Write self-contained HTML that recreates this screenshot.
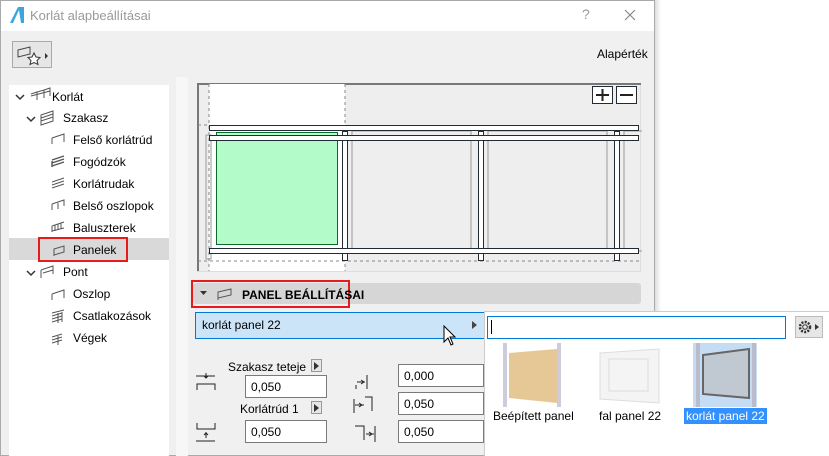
<!DOCTYPE html>
<html><head><meta charset="utf-8"><style>
*{margin:0;padding:0;box-sizing:border-box}
body{width:829px;height:456px;background:#fff;font-family:"Liberation Sans",sans-serif;font-size:12px;color:#000;position:relative;overflow:hidden}
.a{position:absolute}
.t{white-space:nowrap}
.inp{position:absolute;background:#fff;border:1px solid #7a7a7a;height:23px;padding:4px 0 0 5px;font-size:12px}
</style></head><body>
<div class="a" style="left:0;top:0;width:655px;height:456px;background:#f0f0f0;border:1px solid #aaa"></div>
<div class="a" style="left:655px;top:0;width:6px;height:456px;background:linear-gradient(90deg,#ddd,#fff)"></div>
<div class="a" style="left:1px;top:1px;width:653px;height:30px;background:#fff"></div>
<svg class="a" style="left:9px;top:6px" width="16" height="18"><path d="M1 17 L9 1 L15 1 L15 17 Z" fill="#3aa6dd"/><path d="M4 17 L10 4 L12 17Z" fill="#fff"/></svg>
<div class="a t" style="left:30px;top:8px;font-size:13px;color:#999">Korlát alapbeállításai</div>
<div class="a t" style="left:582px;top:6px;font-size:14px;color:#999">?</div>
<svg class="a" style="left:624px;top:9px" width="12" height="12"><path d="M1 1L11 11M11 1L1 11" stroke="#888" stroke-width="1.2"/></svg>
<div class="a" style="left:12px;top:41px;width:40px;height:27px;border:1px solid #aaa;background:#e6e6e6"></div>
<svg class="a" style="left:16px;top:44px" width="34" height="22"><path d="M2 6 L14 3 L14 10 L2 13 Z" fill="none" stroke="#444"/><path d="M18 9 l2 4 4 0.5 -3 3 1 4 -4 -2 -4 2 1-4 -3-3 4-.5z" fill="#fff" stroke="#333"/><path d="M29 9 l3 3 -3 3z" fill="#333"/></svg>
<div class="a t" style="left:597px;top:47px;font-size:12px">Alapérték</div>
<div class="a" style="left:9px;top:85px;width:160px;height:371px;background:#fff"></div>
<div class="a" style="left:9px;top:238px;width:160px;height:22px;background:#d9d9d9"></div>
<div class="a" style="left:38px;top:237px;width:90px;height:25px;border:2px solid #e81b1b"></div>
<svg class="a" style="left:9px;top:85px" width="160" height="260" fill="none" stroke="#555">
<path d="M7 10 l4 4 4-4M18 32 l4 4 4-4M18 186 l4 4 4-4" stroke="#333" stroke-width="1.5"/>
<path d="M22 9 l6-2 v8 M28 7 l7-2 v8 M35 5 l6-2 v8 M22 11 l19-5"/>
<path d="M32 30 l12-4 v10 l-12 4z M32 33 l12-4 M32 36 l12-4"/>
<path d="M43 53 l12-4 v8 M43 53 v6"/>
<path d="M43 75 l12-4 M43 78 l12-4 M43 81 l12-4 M43 76 v6" stroke-width="1.4"/>
<path d="M43 97 l12-4 M43 100 l12-4 M43 103 l12-4"/>
<path d="M43 119 l12-4 v6 M43 119 v6 M49 118 v6"/>
<path d="M43 141 l12-4 M43 141 v6 M46 140 v6 M49 139 v6 M52 138 v6 M43 146 l12-3"/>
<path d="M45 164 l10-3 v6 l-10 3z M45 164 v7"/>
<path d="M32 185 l12-4 v8 M32 185 v8 M34 188 l10-3" />
<path d="M43 209 l12-4 v8 M43 209 v6"/>
<path d="M43 228 l12-3 M43 231 l10-3 M43 234 l10-3 M43 237 l10-3 M49 228 v10 M53 227 v10"/>
<path d="M43 252 l10-3 M43 255 l10-3 M43 258 l10-3 M49 251 v10"/>
</svg>
<div class="a t" style="left:52px;top:90px">Korlát</div>
<div class="a t" style="left:63px;top:111px">Szakasz</div>
<div class="a t" style="left:73px;top:133px">Felső korlátrúd</div>
<div class="a t" style="left:73px;top:155px">Fogódzók</div>
<div class="a t" style="left:73px;top:177px">Korlátrudak</div>
<div class="a t" style="left:73px;top:199px">Belső oszlopok</div>
<div class="a t" style="left:73px;top:221px">Baluszterek</div>
<div class="a t" style="left:73px;top:243px">Panelek</div>
<div class="a t" style="left:63px;top:265px">Pont</div>
<div class="a t" style="left:73px;top:287px">Oszlop</div>
<div class="a t" style="left:73px;top:309px">Csatlakozások</div>
<div class="a t" style="left:73px;top:331px">Végek</div>
<div class="a" style="left:176px;top:77px;width:12px;height:379px;background:#f7f7f7"></div>
<svg class="a" style="left:197px;top:83px" width="445" height="190">
<rect x="0.5" y="0.5" width="443" height="188" fill="#eee" stroke="#ddd"/>
<path d="M1 188 V1 H444" stroke="#777" stroke-width="2" fill="none"/>
<rect x="12" y="1" width="136" height="187" fill="#fff"/>
<path d="M12 1 V188 M148 1 V188 M1 42 H12 M1 178 H444" stroke="#888" stroke-dasharray="3,3"/>
<g fill="none" stroke="#999">
<rect x="9" y="52" width="5" height="124"/>
<rect x="155" y="48" width="119" height="120"/><rect x="291" y="48" width="119" height="120"/><rect x="427" y="48" width="20" height="120"/>
</g>
<rect x="19.5" y="49.5" width="121" height="112" fill="#b3fcc9" stroke="#0b6a2a"/>
<g fill="#fff" stroke="#222a33">
<rect x="145.5" y="48.5" width="5" height="129"/><rect x="281.5" y="48.5" width="5" height="129"/><rect x="417.5" y="48.5" width="5" height="129"/>
<rect x="12.5" y="42.5" width="429" height="5"/><rect x="12.5" y="52.5" width="429" height="5"/><rect x="12.5" y="165.5" width="429" height="5"/>
</g>
<g fill="#fff" stroke="#222a33"><rect x="395.5" y="3.5" width="20" height="17"/><rect x="419.5" y="3.5" width="20" height="17"/></g>
<path d="M405.5 6 V18 M399 12 H412 M423 12 H436" stroke="#222" stroke-width="2"/>
</svg>
<div class="a" style="left:193px;top:283px;width:448px;height:21px;background:#d6d6d6;border-radius:3px"></div>
<div class="a" style="left:191px;top:280px;width:159px;height:28px;border:2px solid #e81b1b"></div>
<svg class="a" style="left:200px;top:287px" width="36" height="14"><path d="M0 4h7l-3.5 4z" fill="#333"/><path d="M18 5 l13-3 v6 l-13 3z M18 5 v8" fill="none" stroke="#555"/></svg>
<div class="a t" style="left:242px;top:288px;font-weight:bold;font-size:12px">PANEL BEÁLLÍTÁSAI</div>
<div class="a" style="left:195px;top:312px;width:290px;height:27px;background:#cce4f7;border:1px solid #0078d7"></div>
<div class="a t" style="left:202px;top:318px">korlát panel 22</div>
<svg class="a" style="left:472px;top:321px" width="6" height="8"><path d="M0 0l5 4-5 4z" fill="#444"/></svg>
<svg class="a" style="left:443px;top:325px" width="14" height="22"><path d="M1 1 V17 L5 13 L8 20 L10 19 L7 12 L12 12 Z" fill="#fff" stroke="#000"/></svg>
<div class="a t" style="left:228px;top:360px">Szakasz teteje</div>
<div class="a" style="left:311px;top:359px;width:11px;height:13px;border:1px solid #999;background:#e6e6e6"></div>
<svg class="a" style="left:314px;top:362px" width="6" height="8"><path d="M0 0l5 4-5 4z" fill="#333"/></svg>
<div class="a t" style="left:240px;top:402px">Korlátrúd 1</div>
<div class="a" style="left:311px;top:401px;width:11px;height:13px;border:1px solid #999;background:#e6e6e6"></div>
<svg class="a" style="left:314px;top:404px" width="6" height="8"><path d="M0 0l5 4-5 4z" fill="#333"/></svg>
<div class="inp" style="left:245px;top:375px;width:82px">0,050</div>
<div class="inp" style="left:245px;top:420px;width:82px">0,050</div>
<div class="inp" style="left:398px;top:364px;width:86px">0,000</div>
<div class="inp" style="left:398px;top:392px;width:86px">0,050</div>
<div class="inp" style="left:398px;top:420px;width:86px">0,050</div>
<svg class="a" style="left:195px;top:370px" width="190" height="80" fill="none" stroke="#222">
<path d="M1 6 H20 M11 3 v5 M9 6 l2 2 2-2 M2 20 v-6 h18 v6"/>
<path d="M2 53 v6 h18 v-6 M1 71 H20 M11 62 v6 M9 65 l2-2 2 2"/>
<path d="M172 5 v14 M162 12 h8 M166 10 l3 2-3 2 M161 15 v4"/>
<path d="M170 27 h7 v14 M160 35 h9 M164 33 l3 2 -3 2 M159 29 v14" />
<path d="M160 56 h9 v14 M180 56 v16 M171 64 h8 M174 62 l3 2-3 2"/>
</svg>
<div class="a" style="left:484px;top:311px;width:345px;height:145px;background:#fff;border:1px solid #ccc;border-right:none;border-bottom:none"></div>
<div class="a" style="left:487px;top:316px;width:299px;height:23px;border:1px solid #0078d7;background:#fff"></div>
<div class="a" style="left:491px;top:320px;width:1px;height:14px;background:#000"></div>
<div class="a" style="left:795px;top:316px;width:28px;height:22px;border:1px solid #bbb;background:#e6e6e6"></div>
<svg class="a" style="left:797px;top:318px" width="26" height="18"><circle cx="8" cy="9" r="5" fill="none" stroke="#333" stroke-dasharray="2,1.3" stroke-width="2.5"/><circle cx="8" cy="9" r="2.3" fill="none" stroke="#333"/><path d="M18 6l4 3-4 3z" fill="#333"/></svg>
<svg class="a" style="left:500px;top:343px" width="270" height="66">
<rect x="3" y="0" width="4" height="64" fill="#ccd"/><rect x="57" y="0" width="4" height="64" fill="#ccd"/>
<path d="M9 10 L57 6 V60 L9 55Z" fill="#e6c896"/>
<path d="M100 10 L159 6 V60 L100 56Z" fill="#f4f4f4" stroke="#ddd"/><rect x="109" y="16" width="39" height="32" fill="none" stroke="#ddd"/>
<rect x="193" y="0" width="64" height="64" fill="#c4dcf4"/>
<rect x="196" y="0" width="4" height="64" fill="#bbc"/><rect x="252" y="0" width="4" height="64" fill="#bbc"/>
<path d="M203 12 L249 6 V55 L203 51Z" fill="#c0c8d2" stroke="#666" stroke-width="2"/>
</svg>
<div class="a t" style="left:493px;top:409px">Beépített panel</div>
<div class="a t" style="left:599px;top:409px">fal panel 22</div>
<div class="a t" style="left:684px;top:408px;background:#3390ff;color:#fff;padding:1px 2px">korlát panel 22</div>
</body></html>
